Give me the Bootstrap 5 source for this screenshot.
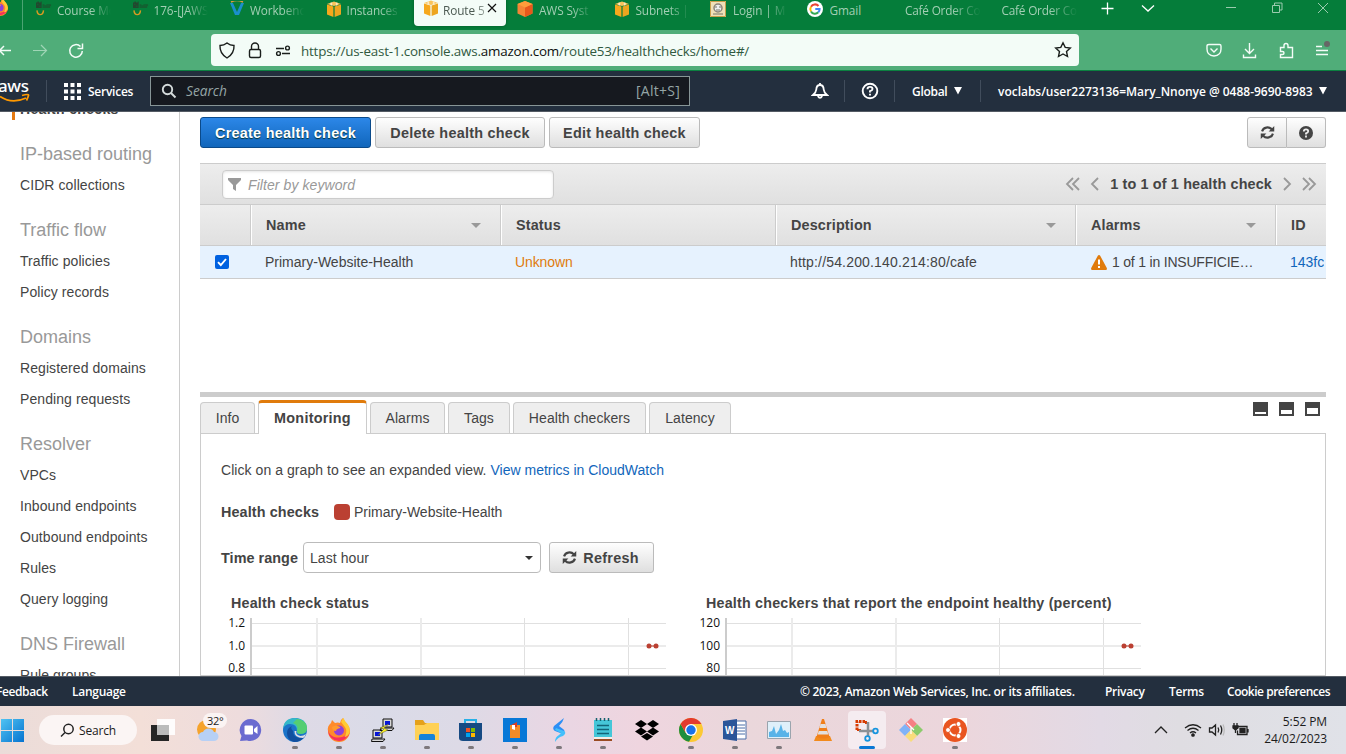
<!DOCTYPE html>
<html lang="en">
<head>
<meta charset="utf-8">
<title>Route 53 Console</title>
<link href="https://cdn.jsdelivr.net/npm/bootstrap@5.3.0/dist/css/bootstrap.min.css" rel="stylesheet">
<style>
:root{--seg:"Open Sans","Noto Sans",sans-serif}
html,body{height:754px;overflow:hidden}
body{font:14px/20px "Liberation Sans",Arial,sans-serif;color:#444;background:#fff}
svg{display:block;flex:none}
.tabstrip{height:30px;background:#057d3a;font:11.8px/18px var(--seg);color:#a3cfb4}
.btab{width:96.5px;flex:none;padding-left:8px;height:18px}
.btab svg{margin-right:5px}
.btab .lbl{white-space:nowrap;overflow:hidden;width:54px;-webkit-mask-image:linear-gradient(90deg,#000 62%,transparent);letter-spacing:-.1px;position:relative;top:1px}
.btab.on{width:92px;margin:-10px 3px 0 0;height:36px;padding:10px 0 0 9px;background:#f3fcf7;color:#4c5a52;border-radius:4px;box-shadow:0 0 3px rgba(0,50,20,.5)}
.toolbar{height:41px;background:#50ad79;border-bottom:1px solid #0b8040}
.urlbox{width:868px;height:32px;margin-left:127px;margin-top:-1px;background:#f3fcf7;border-radius:4px;font:13.4px/30px var(--seg);color:#30593f;letter-spacing:-.19px}
.urlbox span{padding-top:2px}
.urlbox b{font-weight:400;color:#0b0f0d}
.awsbar{height:41px;background:#232f3e;border-bottom:1px solid #545b64;color:#fff;font:600 12px/20px var(--seg)}
.awsbar .nt{padding-top:2px}
.vr1{width:1px;height:22px;background:#414d5c;flex:none}
.srch{width:540px;height:30px;border:1px solid #879596;background:#16191f;color:#95a5a6;font-weight:400;font-size:13.7px}
.work{height:564px;overflow:hidden}
.side{width:180px;border-right:1px solid #ccc;flex:none;overflow:hidden}
.side ul{margin:-18px 0 0;padding:0 0 0 20px;list-style:none;white-space:nowrap}
.side li{height:31px;line-height:31px;font-size:14px;letter-spacing:.08px}
.side h2{height:31px;line-height:31px;font-size:18px;font-weight:400;color:#999;margin:14px 0 0}
.side .cur{font-weight:700;margin-left:-8px;padding-left:8px;position:relative;letter-spacing:.35px}
.side .cur:before{content:"";position:absolute;left:0;top:5px;width:3px;height:21px;background:#e47911}
.main{padding:5px 20px 0 20px;flex:1;min-width:0}
.cb{height:31px;border:1px solid #bbb;border-radius:3px;background:linear-gradient(#fefefe,#dfdfdf);color:#444;font:700 14.4px/20px "Liberation Sans",Arial,sans-serif;letter-spacing:.26px;padding:0;margin-right:4px}
.cb.pri{background:linear-gradient(#2c87e8,#1166bb);border-color:#0b4a8a;color:#fff;text-shadow:0 1px 1px #033}
.fbar{height:42px;margin-top:15px;border-top:1px solid #ccc;border-bottom:1px solid #ccc;background:linear-gradient(#ededed,#e0e0e0);padding:0 9px 0 22px}
.finput{width:332px;height:29px;margin-top:1px;background:#fff;border:1px solid #ccc;border-radius:4px;box-shadow:inset 0 1px 3px #e4e4e4;color:#999;font-style:italic;padding-left:5px;letter-spacing:.08px}
.pager{font-weight:700;font-size:14.4px;letter-spacing:.14px;color:#444}
.grid1{display:grid;grid-template-columns:50px 250px 275px 300px 200px 51px;overflow:hidden}
.th1{height:41px;border-bottom:1px solid #ccc;background:linear-gradient(#ededed,#e0e0e0);font-weight:700;font-size:14.4px;letter-spacing:.15px}
.th1>div{border-left:1px solid #ccc;box-shadow:inset 1px 0 #fff;padding:0 19px 0 15px;display:flex;align-items:center;justify-content:space-between}
.th1>div:first-child{border:0;box-shadow:none}
.td1{height:33px;border-bottom:1px solid #ccc;background:#e6f2fe;line-height:32px;white-space:nowrap}
.td1>div{padding-left:15px;overflow:hidden}
.tri{width:0;height:0;border:5px solid transparent;border-top-color:#999;border-bottom:0}
.splitter{height:5px;background:#ccc;margin-top:113px}
.tabs1{height:37px;margin-bottom:-1px}
.tabs1 div.t{height:31px;border:1px solid #ccc;border-bottom:0;background:#eee;border-radius:4px 4px 0 0;text-align:center;line-height:31px;margin-right:3px;margin-bottom:1px;flex:none;letter-spacing:.06px}
.tabs1 div.t.on{height:34px;border-top:3px solid #e07b0c;background:#fff;font-weight:700;font-size:14.4px;letter-spacing:.25px;margin-bottom:0;line-height:30px}
.pane{border:1px solid #ccc;height:243px;padding:26px 20px 0;overflow:hidden}
a{color:#1166bb;text-decoration:none}
.sw{width:16px;height:16px;border-radius:4px;background:#bb4032}
.sel{width:238px;height:31px;border:1px solid #bbb;border-radius:4px;padding:0 7px 0 6px;margin:0 8px 0 5px}
.cht{width:475px}
.cht .ttl{font-weight:700;font-size:14.3px;letter-spacing:.2px;padding-left:10px;height:25px;white-space:nowrap}
.cht text{font:12px "Open Sans","Noto Sans",sans-serif;fill:#111}
.foot{height:30px;background:#232f3e;border-top:1px solid #545b64;color:#fff;font:600 12px/30px var(--seg);letter-spacing:-.28px;white-space:nowrap}
.task{height:48px;background:linear-gradient(90deg,#ebdcd9 0,#f3dfd8 140px,#eedcdd 240px,#dedae6 300px,#dadbe8 380px,#dddae6 460px,#ead6e3 570px,#efd5df 640px,#ead7db 740px,#ecd6dc 960px,#e2dae5 1100px,#dfdde2 1180px,#e0e2e8 1346px);font:12px/17px var(--seg);color:#1c1c1c}
.pill1{width:98px;height:30px;border-radius:15px;background:#fbf5f4}
.ti{width:44px;height:48px;flex:none;position:relative;display:flex;align-items:center;justify-content:center}
.ti.run:after{content:"";position:absolute;left:19px;top:40px;width:6px;height:3px;border-radius:2px;background:#7d787c}
.ti.act:before{content:"";position:absolute;left:3px;top:5px;width:38px;height:38px;border-radius:4px;background:#f5ecf0}
.ti.act:after{content:"";position:absolute;left:14px;top:40px;width:16px;height:3px;border-radius:2px;background:#0a78d4}
.ti svg{position:relative}
.temp{position:absolute;left:19px;top:7px;background:#fbf4f3;border-radius:8px;font-size:11px;line-height:15px;padding:0 4px;letter-spacing:-.3px}
</style>
</head>
<body class="d-flex flex-column">
<svg width="0" height="0" class="position-absolute">
<defs>
<symbol id="cube" viewBox="0 0 16 16"><path d="M1 3 8 .5 15 3 8 5z" fill="#f9c35a"/><path d="M1 3.6 7.4 5.4V16L1 13.6z" fill="#f6a81c"/><path d="M15 3.6 8.6 5.4V16l6.400-2.400z" fill="#eda51f"/><path d="M4.400 1.800v2.400l1.800.5V1.400zM9.800 1.400v3.300l1.800-.5V1.800z" fill="#fdf3d8" opacity=".8"/></symbol>
<symbol id="jaws" viewBox="0 0 17 16"><path d="M0 1h1.500V0H3v1h2V0h1v7H0z" fill="#24472f"/><path d="M7 3h2v1h2V3h5v2h-1v2H7z" fill="#155f31"/><path d="M1 3h1.500M3 5h2M8 5h2M12 4h2" stroke="#0b6a35"/><path d="M1 9.500q.5 4.500 3.500 4.500T8 9.500" fill="none" stroke="#d99a22" stroke-width="1.500"/></symbol>
<symbol id="sync" viewBox="0 0 16 16"><g fill="none" stroke="#444" stroke-width="2.300"><path d="M2.200 6.800A6 5.600 0 0 1 12.600 4.600M13.800 9.200A6 5.600 0 0 1 3.400 11.400"/></g><path d="M15.200 1v6H9.200zM.8 15V9h6z" fill="#444"/></symbol>
<symbol id="ff" viewBox="0 0 24 24"><path d="M1 13Q0 8 4 5l1-3 3 3q3-1 5 0 0-3 3-5 1 3 4 6 3 3 3 7a11 11 0 0 1-22 0z" fill="#ff8a2a"/><path d="M1 12q1 5 6 7 8 2 13-3l2.500-1A11 11 0 0 1 1 13z" fill="#f8305c"/><path d="M14 4q1-3 2.500-4 1 3 4 6 3 4 2 9-2 4-5 4 3-5 1-9-2-3-4.500-6z" fill="#ffcb33"/><circle cx="12" cy="12.500" r="5" fill="#9040d8"/><path d="M5 9q4-3 8 0 1 1-1.500 1.500Q9 11 9 13q-4 0-4-4z" fill="#ff9a2e"/></symbol>
</defs></svg>

<header class="tabstrip d-flex align-items-start">
  <svg width="8" height="16" viewBox="12 2 11 22"><use href="#ff" width="24" height="24"/></svg>
  <div style="width:14px"></div><div class="vr1 h-100" style="background:#4ba473"></div><div style="width:5px"></div>
  <div class="btab d-flex align-items-center"><svg width="16" height="16"><use href="#jaws"/></svg><span class="lbl">Course Mo</span></div>
  <div class="btab d-flex align-items-center"><svg width="16" height="16"><use href="#jaws"/></svg><span class="lbl">176-[JAWS</span></div>
  <div class="btab d-flex align-items-center"><svg width="16" height="16" viewBox="0 0 16 16"><path d="M1 2h3l4 9 4-9h3l-5 12H6z" fill="#1a8fcb"/><path d="M2 1q6-3 12 0" stroke="#e09b3d" stroke-width="1.500" fill="none"/></svg><span class="lbl">Workbenc</span></div>
  <div class="btab d-flex align-items-center"><svg width="16" height="16"><use href="#cube"/></svg><span class="lbl">Instances |</span></div>
  <div class="btab on d-flex align-items-start"><svg width="16" height="16" style="margin-right:4px"><use href="#cube"/></svg><span class="lbl" style="width:44px;-webkit-mask-image:linear-gradient(90deg,#000 70%,#0006)">Route 5</span><svg width="10" height="10" viewBox="0 0 10 10" style="margin:3px 0 0"><path d="M1 1l8 8M9 1l-8 8" stroke="#111" stroke-width="1.200"/></svg></div>
  <div class="btab d-flex align-items-center"><svg width="16" height="16" viewBox="0 0 16 16"><path d="M8 0l7.500 3v9.500L8 16 .5 12.500V3z" fill="#f58536"/><path d="M8 6.500V16l7.500-3.500V3z" fill="#e8581c"/><path d="M.5 3 8 0l7.500 3L8 6.500z" fill="#ff9d3b"/></svg><span class="lbl" style="margin-left:1px">AWS Syst</span></div>
  <div class="btab d-flex align-items-center"><svg width="16" height="16"><use href="#cube"/></svg><span class="lbl" style="margin-left:1px">Subnets |</span></div>
  <div class="btab d-flex align-items-center"><svg width="16" height="16" viewBox="0 0 16 16"><path d="M0 0h16v16H0z" fill="#efe0b8"/><path d="M.5.500h15v15H.5z" fill="none" stroke="#c9a04c"/><circle cx="8" cy="7" r="4" fill="#eee" stroke="#8b8577" stroke-width="1.500"/><path d="M5 6h2m2 0h2M6 9h4M3 13h10" stroke="#776"/></svg><span class="lbl" style="margin-left:2px">Login | M</span></div>
  <div class="btab d-flex align-items-center"><svg width="16" height="16" viewBox="0 0 16 16"><circle cx="8" cy="8" r="8" fill="#fff"/><g fill="none" stroke-width="2"><path d="M4 5.700A4.600 4.600 0 0 1 11.500 5" stroke="#ea4335"/><path d="M4 5.700a4.600 4.600 0 0 0 0 4.800" stroke="#fbbc05"/><path d="M4 10.400a4.600 4.600 0 0 0 7.300.900" stroke="#34a853"/><path d="M11.300 11.300A4.600 4.600 0 0 0 12.600 8H8.300" stroke="#4285f4"/></g></svg><span class="lbl" style="margin-left:2px;-webkit-mask-image:none">Gmail</span></div>
  <div class="btab d-flex align-items-center" style="padding-left:10px"><span class="lbl" style="width:76px;letter-spacing:-.2px">Café Order Co</span></div>
  <div class="btab d-flex align-items-center" style="padding-left:10px"><span class="lbl" style="width:76px;letter-spacing:-.2px">Café Order Co</span></div>
  <svg width="236" height="20" viewBox="1094 0 236 20" fill="none" stroke="#fff" stroke-width="1.300" style="margin-left:auto;margin-right:16px"><path d="M1101.500 8.500h12M1107.500 2.500v12M1142 5.500l6 5.500 6-5.500"/><g stroke="#9bcbae" stroke-width="1"><path d="M1226 7.500h10M1272.500 5.500h7v7h-7zM1274.500 5v-2h7.500v7h-2M1318 3l10 10M1328 3l-10 10"/></g></svg>
</header>

<div class="toolbar d-flex align-items-center">
  <svg width="84" height="24" viewBox="0 38 84 24" fill="none" stroke="#f3fcf7" stroke-width="1.500"><path d="M11 50.500H0M4 46l-4.500 4.500L4 55"/><g stroke="#a0d5b6" stroke-width="1.200"><path d="M33 50.500h13M41 45l5.500 5.500L41 56"/></g><path d="M80.500 46.500a6.300 6.300 0 1 0 1.800 4.500M82.500 43.500v5h-5"/></svg>
  <div class="urlbox d-flex align-items-center">
    <svg width="90" height="24" viewBox="211 38 90 24" fill="none" stroke="#1a1f1c" stroke-width="1.400"><path d="M227 43q3 2.500 7 2.500 .5 8-7 12.500-7.500-4.500-7-12.500 4 0 7-2.500z"/><rect x="249.500" y="49.500" width="11" height="8" rx="1.500"/><path d="M251.500 49.500v-3a3.500 3.500 0 0 1 7 0v3"/><path d="M276 48.500h8M282 53.500h8"/><circle cx="287.500" cy="48" r="1.900"/><circle cx="278.500" cy="53.500" r="1.900"/></svg>
    <span>https://us-east-1.console.aws.<b>amazon.com</b>/route53/healthchecks/home#/</span>
    <svg width="18" height="18" viewBox="0 0 18 18" class="ms-auto" fill="none" stroke="#1a1f1c" stroke-width="1.400" style="margin-right:7px"><path d="M9 1.800l2.200 4.600 5.100.6-3.800 3.500 1 5L9 13l-4.500 2.500 1-5L1.700 7l5.100-.6z"/></svg>
  </div>
  <svg width="140" height="26" viewBox="1200 36 140 26" fill="none" stroke="#f3fcf7" stroke-width="1.400" style="margin-left:121px"><path d="M1209 43.500h10.500q1.500 0 1.500 1.500v3q0 6.500-7 7-7-.5-7-7v-3q0-1.500 2-1.500zM1210.500 47.500l3.500 3.500 3.500-3.500M1249.500 42v10M1245 48l4.500 4.500L1254 48M1243.500 53.500v3h12v-3"/><path d="M1280.500 46.500h3.500v-2q0-2 2-2t2 2v2h4.500v10h-12v-3h2q1.500 0 1.500-1.500t-1.500-1.500h-2zM1316 45.500h6M1316 49.500h12M1316 53.500h12"/><circle cx="1327" cy="43" r="3" fill="#666" stroke="none"/></svg>
</div>

<nav class="awsbar d-flex align-items-center">
  <div style="width:46px;height:36px" class="position-relative"><span class="position-absolute" style="left:-2px;top:4px;font:500 17px/18px 'Noto Sans',sans-serif;letter-spacing:-.4px">aws</span><svg width="30" height="12" viewBox="0 0 30 12" class="position-absolute" style="left:0;top:20px" fill="none" stroke="#f90" stroke-width="1.700"><path d="M0 3.500q12 8 26 1.500M22 2.500q7-2 6.500 0t-2 5"/></svg></div>
  <div class="vr1"></div>
  <svg width="17" height="17" viewBox="0 0 17 17" fill="#fff" style="margin:0 7px 0 17px"><path d="M0 0h4v4H0zM6.500 0h4v4h-4zM13 0h4v4h-4zM0 6.500h4v4H0zM6.500 6.500h4v4h-4zM13 6.500h4v4h-4zM0 13h4v4H0zM6.500 13h4v4h-4zM13 13h4v4h-4z"/></svg>
  <span class="nt" style="width:62px;letter-spacing:-.25px">Services</span>
  <div class="srch d-flex align-items-center justify-content-between"><span class="d-flex align-items-center"><svg width="16" height="16" viewBox="0 0 16 16" style="margin:0 9px 0 10px" fill="none" stroke="#d5dbdb" stroke-width="1.900"><circle cx="6.500" cy="6.500" r="4.700"/><path d="M10 10l4.500 4.500"/></svg><i style="letter-spacing:0">Search</i></span><span style="margin-right:9px;font-size:14px;letter-spacing:.25px">[Alt+S]</span></div>
  <svg width="18" height="18" viewBox="0 0 18 18" fill="none" stroke="#fff" stroke-width="1.800" style="margin-left:121px"><path d="M9 1v2M9 3Q5.500 3 5.300 7.500 5 10.500 2 13h14q-3-2.500-3.300-5.500Q12.500 3 9 3zM6.800 14q2.200 3.500 4.400 0"/></svg>
  <div class="vr1" style="margin:0 16px 0 15px"></div>
  <svg width="18" height="18" viewBox="0 0 18 18" fill="none" stroke="#fff" stroke-width="1.900"><circle cx="9" cy="9" r="7.300"/><path d="M6.500 7.200q0-2.300 2.500-2.300t2.500 2Q11.500 8.300 9 9.200v1.300M9 11.800v1.800"/></svg>
  <div class="vr1" style="margin:0 17px 0 15px"></div>
  <span class="nt" style="width:42px;letter-spacing:-.3px">Global</span><svg width="8" height="8" viewBox="0 0 8 8"><path d="M0 0h8L4 7.500z" fill="#fff"/></svg>
  <div class="vr1" style="margin:0 17px 0 18px"></div>
  <span class="nt text-nowrap" style="width:321px;letter-spacing:-.02px">voclabs/user2273136=Mary_Nnonye @ 0488-9690-8983</span><svg width="8" height="8" viewBox="0 0 8 8"><path d="M0 0h8L4 7.500z" fill="#fff"/></svg>
</nav>

<div class="work d-flex">
  <aside class="side"><ul>
    <li class="cur">Health checks</li>
    <h2>IP-based routing</h2><li>CIDR collections</li>
    <h2>Traffic flow</h2><li>Traffic policies</li><li>Policy records</li>
    <h2>Domains</h2><li>Registered domains</li><li>Pending requests</li>
    <h2>Resolver</h2><li>VPCs</li><li>Inbound endpoints</li><li>Outbound endpoints</li><li>Rules</li><li>Query logging</li>
    <h2>DNS Firewall</h2><li>Rule groups</li>
  </ul></aside>
  <main class="main">
    <div class="d-flex">
      <button class="btn cb pri" style="width:171px">Create health check</button>
      <button class="btn cb" style="width:170px">Delete health check</button>
      <button class="btn cb" style="width:151px">Edit health check</button>
      <div class="ms-auto d-flex"><button class="btn cb me-0 rounded-end-0 d-flex align-items-center justify-content-center" style="width:40px"><svg width="15" height="15"><use href="#sync"/></svg></button><button class="btn cb me-0 rounded-start-0 border-start-0 d-flex align-items-center justify-content-center" style="width:39px"><svg width="14" height="14" viewBox="0 0 14 14"><circle cx="7" cy="7" r="7" fill="#444"/><path d="M4.800 5.500q0-2.200 2.200-2.200t2.200 1.900Q9.200 6.500 7 7.300v1.200M7 9.500v1.900" fill="none" stroke="#eee" stroke-width="1.800"/></svg></button></div>
    </div>
    <div class="fbar d-flex align-items-center justify-content-between">
      <div class="finput d-flex align-items-center"><svg width="13" height="13" viewBox="0 0 13 13" style="margin-right:7px"><path d="M0 0h13v2L8 7v6L5 11V7L0 2z" fill="#999"/></svg>Filter by keyword</div>
      <div class="pager d-flex align-items-center"><svg width="36" height="16" viewBox="0 0 36 16" fill="none" stroke="#999" stroke-width="1.800" style="margin-right:9px"><path d="M8 2L2 8l6 6M14 2L8 8l6 6M33 2l-6 6 6 6"/></svg>1 to 1 of 1 health check<svg width="36" height="16" viewBox="0 0 36 16" fill="none" stroke="#999" stroke-width="1.800" style="margin-left:9px"><path d="M3 2l6 6-6 6M22 2l6 6-6 6M28 2l6 6-6 6"/></svg></div>
    </div>
    <div class="grid1 th1"><div></div><div>Name<i class="tri"></i></div><div>Status</div><div>Description<i class="tri"></i></div><div>Alarms<i class="tri"></i></div><div>ID</div></div>
    <div class="grid1 td1">
      <div class="d-flex align-items-center"><svg width="14" height="14" viewBox="0 0 14 14"><rect width="14" height="14" rx="2" fill="#0061e0"/><path d="M3 7.200l2.800 2.800L11 4" fill="none" stroke="#fff" stroke-width="1.900"/></svg></div>
      <div>Primary-Website-Health</div><div style="color:#e07b0c;letter-spacing:-.1px">Unknown</div><div style="letter-spacing:.17px">http://54.200.140.214:80/cafe</div>
      <div class="d-flex align-items-center" style="letter-spacing:-.2px"><svg width="16" height="15" viewBox="0 0 16 15" style="margin:0 5px 0 1px"><path d="M8 0q.8 0 1.200.8L15.800 13q.5 2-1 2H1.200q-1.500 0-1-2L6.800.8Q7.200 0 8 0z" fill="#e07b0c"/><path d="M8 4.500v5M8 11v2" stroke="#fff" stroke-width="2"/></svg>1 of 1 in INSUFFICIE…</div>
      <div style="padding-right:2px"><a href="#" class="d-block overflow-hidden">143fc</a></div>
    </div>
    <div class="splitter"></div>
    <div class="tabs1 d-flex align-items-end">
      <div class="t" style="width:55px">Info</div><div class="t on" style="width:109px">Monitoring</div><div class="t" style="width:75px">Alarms</div><div class="t" style="width:62px">Tags</div><div class="t" style="width:133px">Health checkers</div><div class="t" style="width:82px">Latency</div>
      <svg width="68" height="14" viewBox="0 0 68 14" class="ms-auto align-self-start" style="margin:5px 5px 0 0" fill="#444"><path d="M0 0h15v14H0zM26 0h15v14H26zM52 0h15v14H52z"/><path d="M2 10h11v2H2zM28 8h11v4H28zM54 6h11v6H54z" fill="#fff"/></svg>
    </div>
    <section class="pane">
      <div style="letter-spacing:.06px">Click on a graph to see an expanded view. <a href="#" style="letter-spacing:0">View metrics in CloudWatch</a></div>
      <div class="d-flex align-items-center" style="margin-top:22px"><b style="width:113px;font-size:14.400px;letter-spacing:.1px">Health checks</b><span class="sw"></span><span class="ms-1">Primary-Website-Health</span></div>
      <div class="d-flex align-items-center" style="margin-top:20px"><b class="text-nowrap" style="width:77px;font-size:14.400px;letter-spacing:.05px">Time range</b><div class="sel d-flex align-items-center justify-content-between" style="letter-spacing:.08px">Last hour<i class="tri" style="border-width:4px 4px 0;border-top-color:#333"></i></div><button class="btn cb d-flex align-items-center justify-content-center" style="width:105px;padding-right:2px"><svg width="15" height="15" style="margin-right:6px"><use href="#sync"/></svg>Refresh</button></div>
      <div class="d-flex" style="margin-top:20px">
        <div class="cht"><div class="ttl">Health check status</div>
          <svg width="460" height="60" viewBox="221 618 460 60"><path d="M252 623.500h414M252 668.500h414M524.500 618v60M628.500 618v60" stroke="#e0e0e0"/><path d="M252 646h414M317 618v60M421 618v60" stroke="#ebebeb" stroke-width="2"/><path d="M251 618v60" stroke="#ccc" stroke-width="2"/><path d="M649 646h7" stroke="#bb4032"/><circle cx="649" cy="646" r="2.500" fill="#bb4032"/><circle cx="656" cy="646" r="2.500" fill="#bb4032"/><g text-anchor="end"><text x="245" y="627">1.2</text><text x="245" y="650">1.0</text><text x="245" y="672">0.8</text></g></svg></div>
        <div class="cht"><div class="ttl">Health checkers that report the endpoint healthy (percent)</div>
          <svg width="460" height="60" viewBox="221 618 460 60"><path d="M252 623.500h414M252 668.500h414M524.500 618v60M628.500 618v60" stroke="#e0e0e0"/><path d="M252 646h414M317 618v60M421 618v60" stroke="#ebebeb" stroke-width="2"/><path d="M251 618v60" stroke="#ccc" stroke-width="2"/><path d="M649 646h7" stroke="#bb4032"/><circle cx="649" cy="646" r="2.500" fill="#bb4032"/><circle cx="656" cy="646" r="2.500" fill="#bb4032"/><g text-anchor="end"><text x="245" y="627">120</text><text x="245" y="650">100</text><text x="245" y="672">80</text></g></svg></div>
      </div>
    </section>
  </main>
</div>

<footer class="foot d-flex"><span style="margin-left:-4px;width:76px;letter-spacing:-.4px">Feedback</span><span>Language</span><span class="ms-auto" style="width:305px">© 2023, Amazon Web Services, Inc. or its affiliates.</span><span style="width:64px">Privacy</span><span style="width:58px">Terms</span><span style="width:119px;letter-spacing:-.48px">Cookie preferences</span></footer>

<div class="task d-flex align-items-center">
  <svg width="39" height="24" viewBox="0 0 39 24"><defs><linearGradient id="wn" x2="1" y2="1"><stop stop-color="#4fc3f2"/><stop offset="1" stop-color="#0673d0"/></linearGradient></defs><path d="M1 1h11v11H1zM13 1h11v11H13zM1 13h11v11H1zM13 13h11v11H13z" fill="url(#wn)"/></svg>
  <div class="pill1 d-flex align-items-center justify-content-center"><svg width="15" height="15" viewBox="0 0 15 15" fill="none" stroke="#222" stroke-width="1.500" style="margin-right:4px"><circle cx="8.500" cy="6" r="4.700"/><path d="M5 9.500L1 13.500"/></svg><span style="letter-spacing:-.2px;padding-top:1px">Search</span></div>
  <div class="ti" style="margin-left:3px"><svg width="24" height="24" viewBox="0 0 24 24" style="left:1px"><path d="M0 7h18v16H0z" fill="#262626"/><path d="M6 1h18v16H6z" fill="#fff" opacity=".9"/><path d="M6 7h12v10H6z" fill="#bbb"/></svg></div>
  <div class="ti" style="width:45px"><svg width="24" height="24" viewBox="0 0 24 24" style="left:2px"><circle cx="9.500" cy="11.500" r="9.500" fill="#f5a32c"/><path d="M6 23a4.500 4.500 0 0 1 0-9 6 6 0 0 1 11 0 4.500 4.500 0 0 1 0 9z" fill="#b7d0f5"/></svg><span class="temp">32°</span></div>
  <div class="ti"><svg width="24" height="24" viewBox="0 0 24 24"><path d="M12 1a11 11 0 1 1-4 21.500l-7 .5 1.500-5A11 11 0 0 1 12 1z" fill="#6a6bd0"/><rect x="5.500" y="7.500" width="8.500" height="9" rx="1" fill="#fff"/><path d="M15 11l3.500-3v8L15 13.500z" fill="#fff"/></svg></div>
  <div class="ti run"><svg width="24" height="24" viewBox="0 0 24 24"><circle cx="12" cy="12" r="12" fill="#1b74c9"/><path d="M0 11Q1 0 12 0q11 0 12 10 0 6-7 6-4 0-3-3Q14 6 7 6 2 6 0 11z" fill="#35b8c9"/><path d="M14 1q10 1 10 9.500 0 5-6 5.500-4 0-4-3 2-6-4-8z" fill="#5cd35c" opacity=".8"/><path d="M10 13q0 7 8 7l4-2q-4 6-11 6-7-2-7-9 0-5 5-7-2 2 1 5z" fill="#124f9f"/><path d="M13.500 13q-1.500 4 4 5 3 0 5.500-2-1 3-3 4-9 0-8.500-7z" fill="#e2dce5"/></svg></div>
  <div class="ti run"><svg width="24" height="24"><use href="#ff"/></svg></div>
  <div class="ti run"><svg width="24" height="24" viewBox="0 0 24 24" stroke="#111"><path d="M12 1h9v8h-9zM10 10h13l-2 2.500H9zM2 12h9v8H2zM1 21h13l-2 2.500H.5z" fill="#d8d8d8"/><path d="M14 3h5v4h-5zM4 14h5v4H4z" fill="#0616d8" stroke="none"/><path d="M18 6l-9 4 4 1-6 6 10-5-4-2z" fill="#f9ee20" stroke="#554" stroke-width=".5"/></svg></div>
  <div class="ti run"><svg width="24" height="24" viewBox="0 0 24 24"><path d="M0 2h8l2 3h14v17H0z" fill="#e5a11a"/><path d="M0 7h9l3-2h12v17H0z" fill="#ffd155"/><path d="M4 22v-4q0-2 2-2h12q2 0 2 2v4z" fill="#1683d8"/></svg></div>
  <div class="ti run"><svg width="24" height="24" viewBox="0 0 24 24"><path d="M6 6V2h11v4" stroke="#27b0e7" stroke-width="2" fill="none"/><path d="M0 5h23v15q0 3-3 3H4q-4 0-4-3z" fill="#164a83"/><path d="M7 10h4v4H7z" fill="#f25022"/><path d="M12 10h4v4h-4z" fill="#7fba00"/><path d="M7 15h4v4H7z" fill="#00a4ef"/><path d="M12 15h4v4h-4z" fill="#ffb900"/></svg></div>
  <div class="ti run"><svg width="24" height="24" viewBox="0 0 24 24"><path d="M0 0h24v24H0z" fill="#0878d7"/><path d="M7 7h10v13H7z" fill="#f38b28"/><path d="M9 7h3v5l-3-1z" fill="#fff"/><path d="M8 7l6-3v5h-2V7z" fill="#dc3e24"/></svg></div>
  <div class="ti run"><svg width="24" height="24" viewBox="0 0 24 24"><path d="M17 0L7 8q-2 3 1 5l8 3q3-3 0-5l-4-3q4-4 5-8z" fill="#2c8ff5"/><path d="M9 10l8 3q3 2-1 5-5 1-8 6 0-5 4-7l2-2-6-3z" fill="#43c0fb"/></svg></div>
  <div class="ti run"><svg width="24" height="24" viewBox="0 0 24 24"><path d="M3 2h18v20H3z" fill="#45c6d8"/><path d="M3 20h18v3H3z" fill="#9a4b23"/><path d="M3 19h18v2H3z" fill="#f3efe9"/><path d="M6 7.500h12M6 11.500h12M6 15.500h12" stroke="#126478" stroke-width="1.500"/><path d="M5.500 0v3M9.500 0v3M13.500 0v3M17.500 0v3" stroke="#14606e" stroke-width="1.500"/></svg></div>
  <div class="ti"><svg width="24" height="22" viewBox="0 0 24 22"><path d="M6 1l6 4-6 4-6-4zM18 1l6 4-6 4-6-4zM6 8.500l6 4-6 4-6-4zM18 8.500l6 4-6 4-6-4zM12 14l6 3.500-6 4-6-4z" fill="#000"/></svg></div>
  <div class="ti run"><svg width="24" height="24" viewBox="0 0 24 24"><circle cx="12" cy="12" r="12" fill="#fcc934"/><path d="M12 12L6.800 15 1.600 6A12 12 0 0 0 10 23.800L15 15z" fill="#1e8e3e"/><path d="M12 6h10.400A12 12 0 0 0 1.600 6l5.200 9z" fill="#e33b2e"/><circle cx="12" cy="12" r="6" fill="#fff"/><circle cx="12" cy="12" r="4.700" fill="#1a73e8"/></svg></div>
  <div class="ti run"><svg width="24" height="24" viewBox="0 0 24 24"><path d="M12 3h11v18H12z" fill="#fff" stroke="#4b6ea8"/><path d="M14 7h8M14 10h8M14 13h8M14 16h8" stroke="#4b6ea8"/><path d="M0 3l14-2v22L0 21z" fill="#2a5599"/><text x="2" y="16" font-size="10" font-weight="700" fill="#fff" font-family="Liberation Sans">W</text></svg></div>
  <div class="ti run"><svg width="24" height="20" viewBox="0 0 24 20"><path d="M.5 1.500h23v17H.5z" fill="#dff0fa" stroke="#9aa4ad"/><path d="M2 17v-5l3-1 2-5 2 8 3-4 2-6 2 7 2-1 2 3 2-1v5z" fill="#58b3e8"/></svg></div>
  <div class="ti"><svg width="22" height="24" viewBox="0 0 22 24"><path d="M4 18h14l2 5H2z" fill="#f28a1c"/><path d="M10 1h2l5.500 18q-6 3-13 0z" fill="#f07f1a"/><path d="M8.500 6h5l1 4h-7zM6.700 13h8.600l1 3.500H5.700z" fill="#e3e0de"/></svg></div>
  <div class="ti act"><svg width="24" height="24" viewBox="0 0 24 24"><path d="M2 12V3.500h9" fill="none" stroke="#d83b01" stroke-width="3" stroke-dasharray="2.500 1"/><path d="M11 3v3M2 12h4" stroke="#d83b01" stroke-width="2"/><path d="M13 4v14M4 13h14" stroke="#8b9095" stroke-width="2.500"/><circle cx="20.500" cy="13" r="2.300" fill="none" stroke="#1795df" stroke-width="1.800"/><circle cx="12.500" cy="20.500" r="2.300" fill="none" stroke="#1795df" stroke-width="1.800"/></svg></div>
  <div class="ti"><svg width="24" height="24" viewBox="0 0 24 24"><path d="M12 0l6 6-6 6-6-6z" fill="#f58084"/><path d="M6 6l6 6-6 6-6-6z" fill="#80b3f7"/><path d="M18 6l6 6-6 6-6-6z" fill="#8ccb6c"/><path d="M12 12l6 6-6 6-6-6z" fill="#f8dc7c"/><path d="M8 5l7 7M12 9v7" stroke="#fff" stroke-width="1.300"/></svg></div>
  <div class="ti run"><svg width="24" height="24" viewBox="0 0 24 24"><path d="M0 0h24v24H0z" fill="#fff"/><circle cx="12" cy="12" r="12" fill="#e95420"/><circle cx="12" cy="12" r="5.500" fill="none" stroke="#fff" stroke-width="2"/><g fill="#fff" stroke="#e95420"><circle cx="5" cy="12" r="2.500"/><circle cx="15.500" cy="6" r="2.500"/><circle cx="15.500" cy="18" r="2.500"/></g></svg></div>
  <svg width="96" height="20" viewBox="1154 720 96 20" class="ms-auto" fill="none" stroke="#222" stroke-width="1.300"><path d="M1155 733l6-6 6 6M1185 728q8-6.500 16 0M1187.500 730.500q5.500-4.500 11 0M1190 733q3-2.500 6 0"/><circle cx="1193" cy="735" r="1.200" fill="#222"/><path d="M1209.500 728h2.500l3.500-3v10l-3.500-3h-2.500zM1218 727.500q1.500 2.500 0 5M1220.500 725.500q2.500 4.500 0 9"/><path d="M1223 724.500q2.500 5.500 0 11" stroke="#bbb"/><path d="M1237 726.500h10v8h-9.500v-4M1248 729v3.500"/><path d="M1240 728.500h5v4h-5zM1233 726h5v2l-2.500 2-2.500-2z" fill="#222"/><path d="M1234 723v3M1237 723v3M1235.500 729v4"/></svg>
  <div class="text-end" style="width:77px;margin-right:19px;letter-spacing:-.1px">5:52 PM<br>24/02/2023</div>
</div>
<script src="https://cdn.jsdelivr.net/npm/bootstrap@5.3.0/dist/js/bootstrap.bundle.min.js"></script>
</body>
</html>
